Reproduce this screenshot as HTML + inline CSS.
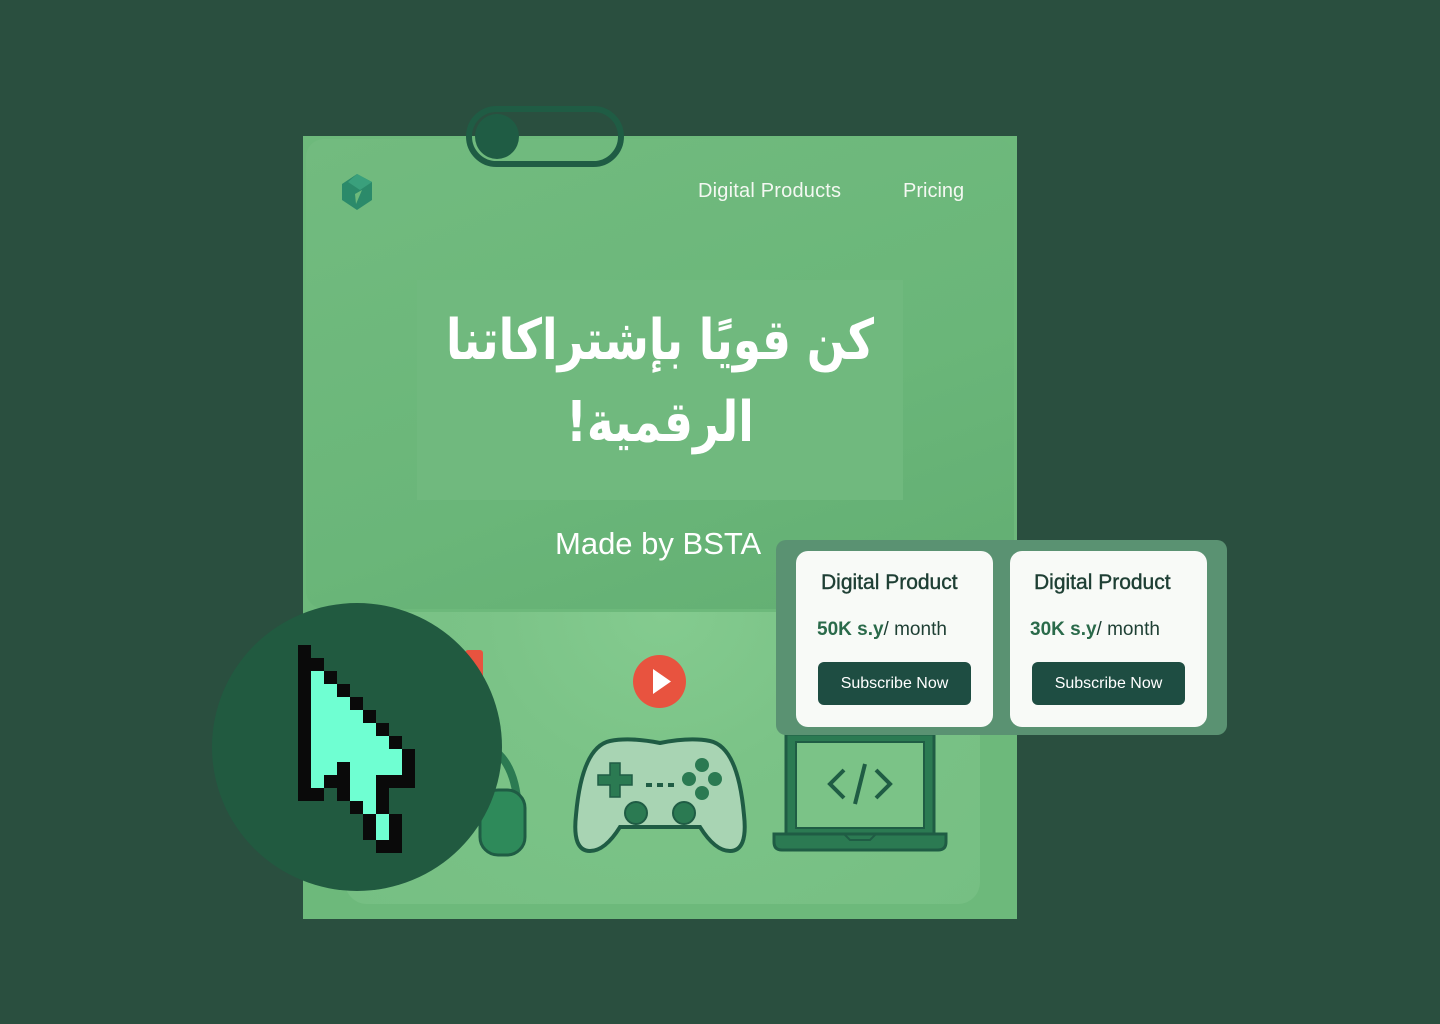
<!DOCTYPE html>
<html><head><meta charset="utf-8"><style>
*{margin:0;padding:0;box-sizing:border-box}
body{width:1440px;height:1024px;background:#2a4f3f;position:relative;overflow:hidden;font-family:"Liberation Sans","DejaVu Sans",sans-serif}
.abs{position:absolute}
</style></head><body>
<div class="abs" style="left:303px;top:136px;width:714px;height:783px;background:#6db97b;"></div>
<div class="abs" style="left:306px;top:139px;width:708px;height:470px;border-radius:18px;background:linear-gradient(160deg,#72bb7f,#6ab679 60%,#62ae72);"></div>
<div class="abs" style="left:417px;top:280px;width:486px;height:220px;background:#70b97e;"></div>
<div class="abs" style="left:345px;top:612px;width:635px;height:292px;border-radius:22px;background:radial-gradient(ellipse at 50% 0%,#84cb8f 0%,#7bc387 40%,#76bf83 100%);"></div>
<!-- toggle -->
<div class="abs" style="left:466px;top:106px;width:158px;height:61px;border:6px solid #1f5c44;border-radius:31px;"></div>
<div class="abs" style="left:475px;top:114px;width:44px;height:45px;border-radius:50%;background:#1f5c44;"></div>
<!-- logo -->
<svg class="abs" style="left:338px;top:172px" width="38" height="40" viewBox="0 0 38 40"><path d="M19 2 L34 10 L34 28 L19 38 L4 28 L4 12 Z" fill="#2b8a6a"/><path d="M19 2 L34 10 L22 18 L10 10 Z" fill="#3aa07c"/><path d="M17 22 L24 18 L18 32 Z" fill="#6db97b"/></svg>
<div class="abs" style="left:698px;top:180px;color:#f4f8f2;font-size:20px;letter-spacing:0.2px">Digital Products</div>
<div class="abs" style="left:903px;top:180px;color:#f4f8f2;font-size:20px;">Pricing</div>
<div class="abs" dir="rtl" style="left:380px;top:300px;width:560px;text-align:center;color:#fff;font-family:'DejaVu Sans',sans-serif;font-weight:bold;font-size:56px;line-height:82px;transform:scaleX(0.81);transform-origin:center;">كن قويًا بإشتراكاتنا الرقمية!</div>
<div class="abs" style="left:555px;top:526px;color:#fff;font-size:31px;">Made by BSTA</div>
<!-- red bits -->
<div class="abs" style="left:465px;top:650px;width:18px;height:32px;background:#e8533f;border-radius:3px"></div>
<div class="abs" style="left:633px;top:655px;width:53px;height:53px;border-radius:50%;background:#e8533f;"></div>
<svg class="abs" style="left:633px;top:655px" width="53" height="53"><path d="M20 14 L38 26.5 L20 39 Z" fill="#fff"/></svg>
<!-- headphones -->
<svg class="abs" style="left:440px;top:720px" width="100" height="140"><path d="M20 20 Q75 20 78 90" stroke="#2b7a52" stroke-width="8" fill="none"/><rect x="40" y="70" width="45" height="65" rx="18" fill="#2e8a5a" stroke="#1f5c44" stroke-width="3"/></svg>
<!-- gamepad -->
<svg class="abs" style="left:570px;top:735px" width="180" height="122" viewBox="0 0 180 122"><path d="M40 6 Q60 2 90 8 Q120 2 140 6 Q168 12 174 80 Q178 116 160 116 Q145 116 130 92 L50 92 Q35 116 20 116 Q2 116 6 80 Q12 12 40 6 Z" fill="#a8d4b3" stroke="#1f5c44" stroke-width="4"/><path d="M40 28 h10 v12 h12 v10 h-12 v12 h-10 v-12 h-12 v-10 h12 z" fill="#2b7a52" stroke="#1f5c44" stroke-width="1.5"/><circle cx="132" cy="30" r="7" fill="#2b7a52"/><circle cx="119" cy="44" r="7" fill="#2b7a52"/><circle cx="145" cy="44" r="7" fill="#2b7a52"/><circle cx="132" cy="58" r="7" fill="#2b7a52"/><rect x="76" y="48" width="6" height="4" fill="#1f5c44"/><rect x="87" y="48" width="6" height="4" fill="#1f5c44"/><rect x="98" y="48" width="6" height="4" fill="#1f5c44"/><circle cx="66" cy="78" r="11" fill="#2b7a52" stroke="#1f5c44" stroke-width="2"/><circle cx="114" cy="78" r="11" fill="#2b7a52" stroke="#1f5c44" stroke-width="2"/></svg>
<!-- laptop -->
<svg class="abs" style="left:772px;top:730px" width="176" height="124" viewBox="0 0 176 124"><rect x="14" y="4" width="148" height="100" fill="#2b7a52" stroke="#1f5c44" stroke-width="3"/><rect x="24" y="12" width="128" height="86" fill="#7bc387" stroke="#1f5c44" stroke-width="2"/><path d="M2 104 H174 V112 Q174 120 166 120 H10 Q2 120 2 112 Z" fill="#2b7a52" stroke="#1f5c44" stroke-width="3"/><path d="M72 104 l6 6 h20 l6-6" fill="none" stroke="#1f5c44" stroke-width="2"/><path d="M72 40 L58 54 L72 68 M104 40 L118 54 L104 68 M93 34 L83 74" stroke="#1f5c44" stroke-width="4" fill="none"/></svg>
<!-- cursor circle -->
<div class="abs" style="left:212px;top:603px;width:290px;height:288px;border-radius:50%;background:#215a40;"></div>
<svg class="abs" style="left:298px;top:645px;shape-rendering:crispEdges" width="130" height="208" viewBox="0 0 10 16">
<g fill="#0a0a0a">
<rect x="0" y="0" width="1" height="12"/><rect x="1" y="11" width="1" height="1"/>
<rect x="1" y="1" width="1" height="1"/><rect x="2" y="2" width="1" height="1"/><rect x="3" y="3" width="1" height="1"/><rect x="4" y="4" width="1" height="1"/><rect x="5" y="5" width="1" height="1"/><rect x="6" y="6" width="1" height="1"/><rect x="7" y="7" width="1" height="1"/><rect x="8" y="8" width="1" height="1"/>
<rect x="8" y="9" width="1" height="1"/>
<rect x="6" y="10" width="3" height="1"/>
<rect x="2" y="10" width="1" height="1"/><rect x="3" y="9" width="1" height="2"/>
<rect x="3" y="11" width="1" height="1"/><rect x="4" y="12" width="1" height="1"/>
<rect x="6" y="11" width="1" height="2"/><rect x="7" y="13" width="1" height="2"/>
<rect x="5" y="13" width="1" height="2"/><rect x="6" y="15" width="2" height="1"/>
</g>
<g fill="#6fffd2">
<rect x="1" y="2" width="1" height="9"/><rect x="2" y="3" width="1" height="7"/><rect x="3" y="4" width="1" height="5"/><rect x="4" y="5" width="1" height="6"/><rect x="5" y="6" width="1" height="7"/><rect x="6" y="7" width="1" height="3"/><rect x="7" y="8" width="1" height="2"/><rect x="4" y="11" width="1" height="1"/><rect x="5" y="11" width="1" height="2"/><rect x="6" y="13" width="1" height="2"/>
</g></svg>
<!-- pricing panel -->
<div class="abs" style="left:776px;top:540px;width:451px;height:195px;border-radius:10px;background:#5a9272;"></div>
<div class="abs" style="left:796px;top:551px;width:197px;height:176px;border-radius:12px;background:#f8faf7;"></div>
<div class="abs" style="left:1010px;top:551px;width:197px;height:176px;border-radius:12px;background:#f8faf7;"></div>
<div class="abs" style="left:821px;top:571px;font-size:21px;color:#1e3f34;-webkit-text-stroke:0.4px #1e3f34">Digital Product</div>
<div class="abs" style="left:1034px;top:571px;font-size:21px;color:#1e3f34;-webkit-text-stroke:0.4px #1e3f34">Digital Product</div>
<div class="abs" style="left:817px;top:619px;font-size:19px;color:#1e3f34;"><b style="color:#2a6a4a">50K s.y</b>/ month</div>
<div class="abs" style="left:1030px;top:619px;font-size:19px;color:#1e3f34;"><b style="color:#2a6a4a">30K s.y</b>/ month</div>
<div class="abs" style="left:818px;top:662px;width:153px;height:43px;border-radius:6px;background:#1e4d42;color:#fff;font-size:16px;line-height:43px;text-align:center;">Subscribe Now</div>
<div class="abs" style="left:1032px;top:662px;width:153px;height:43px;border-radius:6px;background:#1e4d42;color:#fff;font-size:16px;line-height:43px;text-align:center;">Subscribe Now</div>
</body></html>
